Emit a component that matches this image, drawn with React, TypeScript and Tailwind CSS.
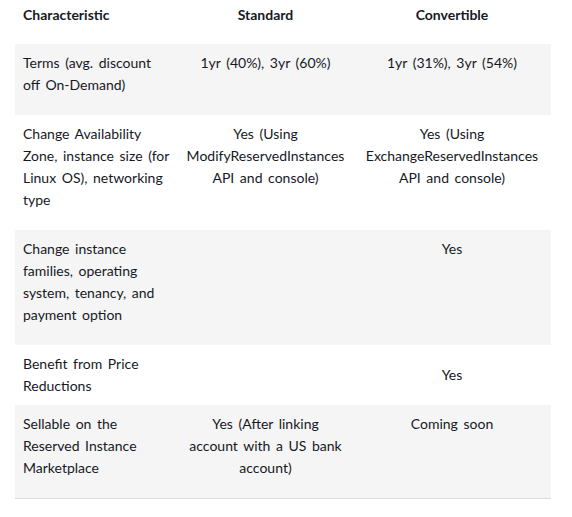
export default function App() {
  const rows: { c: string; s: string; v: string; gray: boolean; tight?: boolean }[] = [
    { c: "Terms (avg. discount off On-Demand)", s: "1yr (40%), 3yr (60%)", v: "1yr (31%), 3yr (54%)", gray: true },
    {
      c: "Change Availability Zone, instance size (for Linux OS), networking type",
      s: "Yes (Using ModifyReservedInstances API and console)",
      v: "Yes (Using ExchangeReservedInstances API and console)",
      gray: false,
    },
    { c: "Change instance families, operating system, tenancy, and payment option", s: "", v: "Yes", gray: true },
    { c: "Benefit from Price Reductions", s: "", v: "Yes", gray: false, tight: true },
    {
      c: "Sellable on the Reserved Instance Marketplace",
      s: "Yes (After linking account with a US bank account)",
      v: "Coming soon",
      gray: true,
    },
  ];

  return (
    <div className="w-[572px] h-[517px] bg-white pl-[15px] text-[14px] leading-[22px] text-[#16191f] font-['Lato',sans-serif] [word-spacing:2px]">
      <table className="table-fixed w-[536px] border-collapse">
        <colgroup>
          <col className="w-[163px]" />
          <col className="w-[175px]" />
          <col className="w-[198px]" />
        </colgroup>
        <thead>
          <tr>
            <th className="text-left font-bold px-2 pt-1 pb-[18px] align-top">Characteristic</th>
            <th className="text-center font-bold px-2 pt-1 pb-[18px] align-top">Standard</th>
            <th className="text-center font-bold px-2 pt-1 pb-[18px] align-top">Convertible</th>
          </tr>
        </thead>
        <tbody className="border-b border-[#dddddd]">
          {rows.map((r) => (
            <tr key={r.c} className={r.gray ? "bg-[#f5f5f5]" : "bg-white"}>
              <td className={`px-2 pt-2 align-top ${r.tight ? "pb-2" : "pb-[19px]"}`}>{r.c}</td>
              <td className={`px-2 pt-2 text-center ${r.tight ? "pb-2 align-middle" : "pb-[19px] align-top"}`}>{r.s}</td>
              <td className={`px-2 pt-2 text-center ${r.tight ? "pb-2 align-middle" : "pb-[19px] align-top"}`}>{r.v}</td>
            </tr>
          ))}
        </tbody>
      </table>
    </div>
  );
}
